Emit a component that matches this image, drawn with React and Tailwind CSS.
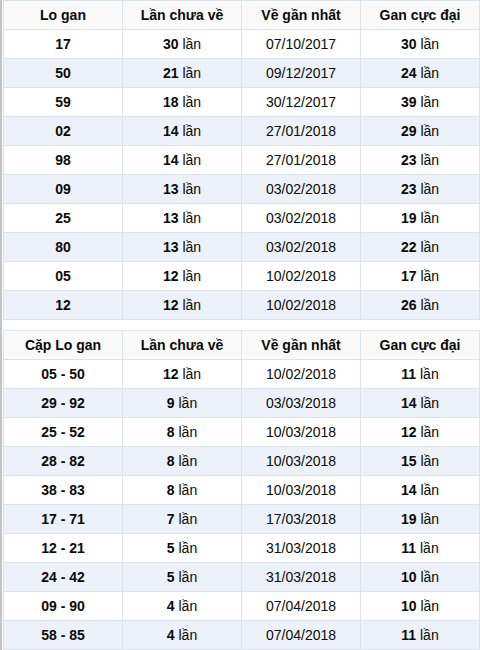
import React from 'react'

const loGan = [
  ['17', '30', '07/10/2017', '30'],
  ['50', '21', '09/12/2017', '24'],
  ['59', '18', '30/12/2017', '39'],
  ['02', '14', '27/01/2018', '29'],
  ['98', '14', '27/01/2018', '23'],
  ['09', '13', '03/02/2018', '23'],
  ['25', '13', '03/02/2018', '19'],
  ['80', '13', '03/02/2018', '22'],
  ['05', '12', '10/02/2018', '17'],
  ['12', '12', '10/02/2018', '26'],
]

const capLoGan = [
  ['05 - 50', '12', '10/02/2018', '11'],
  ['29 - 92', '9', '03/03/2018', '14'],
  ['25 - 52', '8', '10/03/2018', '12'],
  ['28 - 82', '8', '10/03/2018', '15'],
  ['38 - 83', '8', '10/03/2018', '14'],
  ['17 - 71', '7', '17/03/2018', '19'],
  ['12 - 21', '5', '31/03/2018', '11'],
  ['24 - 42', '5', '31/03/2018', '10'],
  ['09 - 90', '4', '07/04/2018', '10'],
  ['58 - 85', '4', '07/04/2018', '11'],
]

const cell = 'border border-[#dde3ec] h-[29px] p-0 text-center align-middle'

const Times = ({ n }) => (
  <>
    <b className="font-bold">{n}</b> lần
  </>
)

const GanTable = ({ title, rows }) => (
  <table className="w-full table-fixed border-collapse text-[14px] leading-none text-[#0a0a0a]">
    <thead>
      <tr className="bg-[#fafafa]">
        {[title, 'Lần chưa về', 'Về gần nhất', 'Gan cực đại'].map((h) => (
          <th key={h} className={`${cell} font-bold`}>{h}</th>
        ))}
      </tr>
    </thead>
    <tbody>
      {rows.map((r, i) => (
        <tr key={r[0]} className={i % 2 ? 'bg-[#edf1f9]' : 'bg-white'}>
          <td className={`${cell} font-bold`}>{r[0]}</td>
          <td className={cell}><Times n={r[1]} /></td>
          <td className={cell}>{r[2]}</td>
          <td className={cell}><Times n={r[3]} /></td>
        </tr>
      ))}
    </tbody>
  </table>
)

export default function App() {
  return (
    <div
      className="w-[480px] h-[650px] overflow-hidden bg-white border-l-2 border-[#c4c4c4] pl-px"
      style={{ fontFamily: '"Liberation Sans", Arial, sans-serif' }}
    >
      <div className="flex flex-col gap-[10px]">
        <GanTable title="Lo gan" rows={loGan} />
        <GanTable title="Cặp Lo gan" rows={capLoGan} />
      </div>
    </div>
  )
}
